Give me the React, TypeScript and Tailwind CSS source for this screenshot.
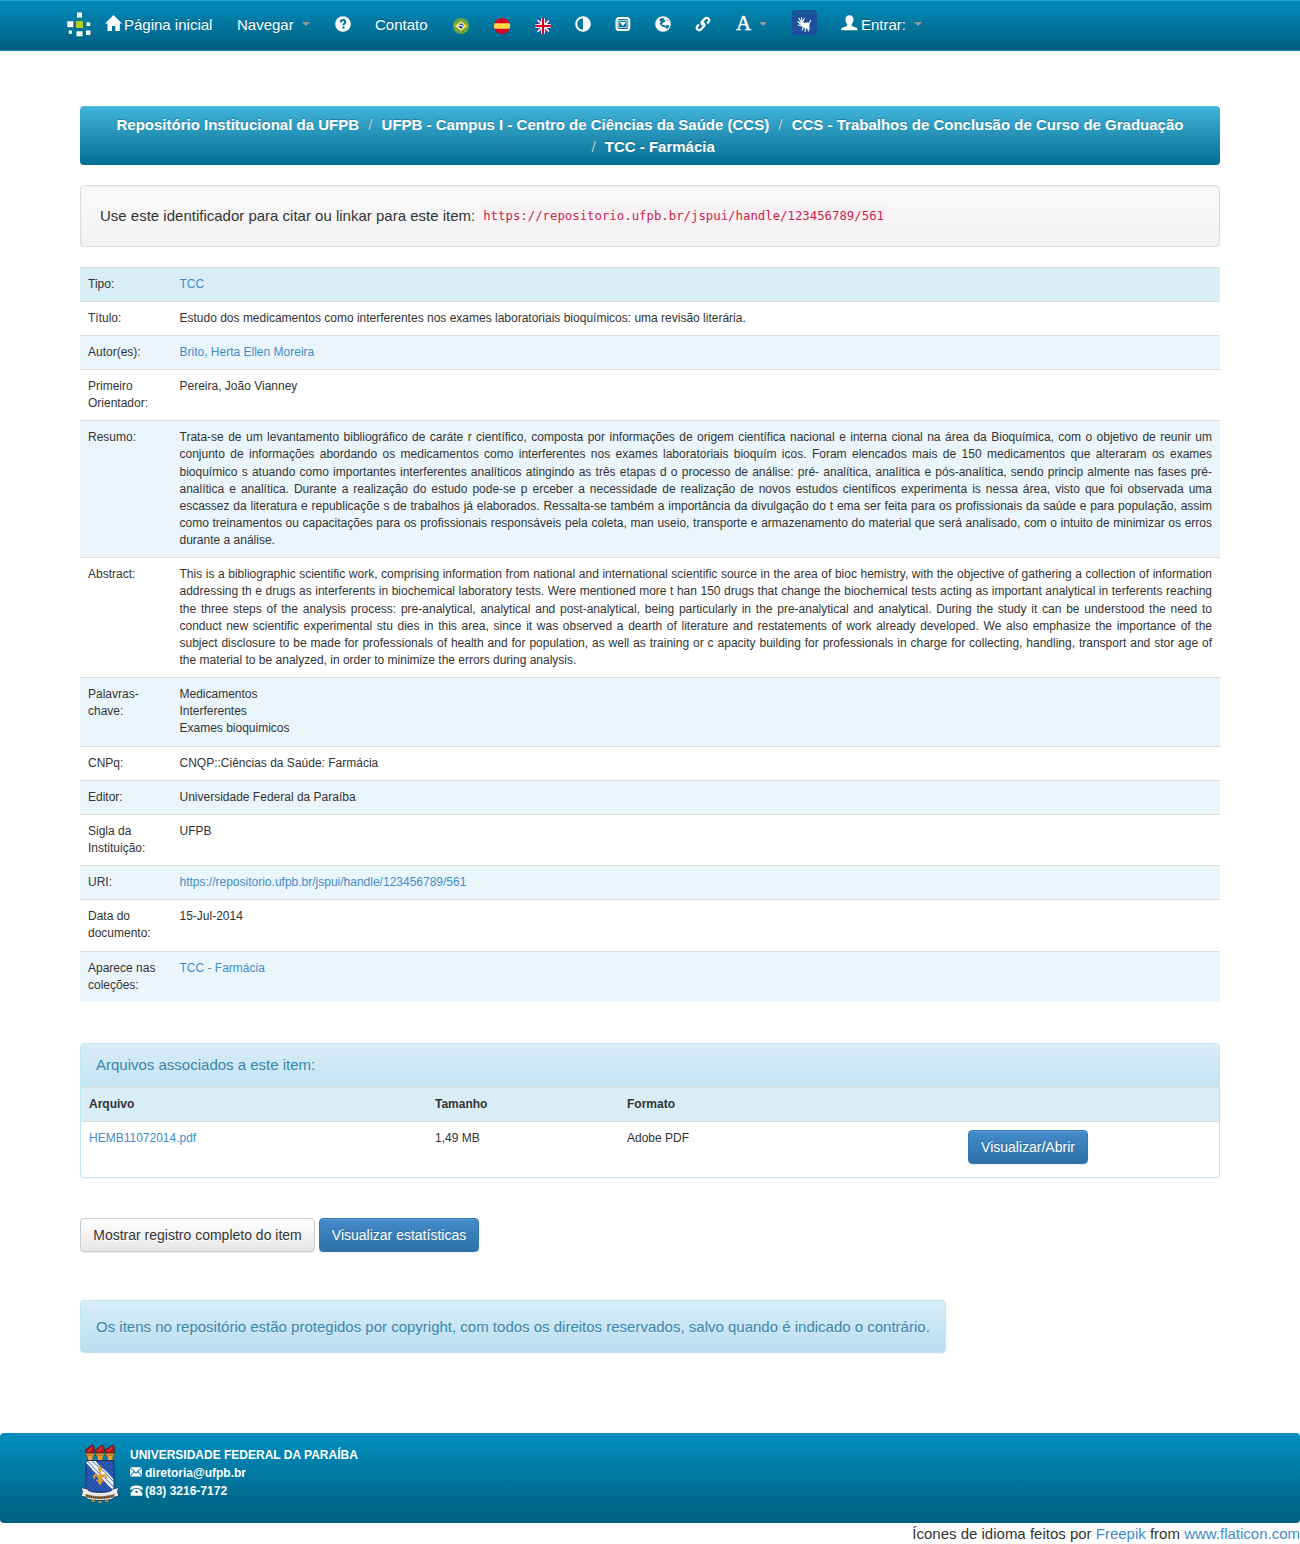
import type { ReactNode } from 'react';

const Caret = ({ className = '' }: { className?: string }) => (
  <span className={`-mt-[2px] inline-block h-0 w-0 border-x-4 border-t-4 border-x-transparent border-t-[#999] ${className}`} />
);

const Logo = () => (
  <svg width="26" height="26" viewBox="0 0 26 26" fill="#fff">
    <rect x="10" y="0.5" width="5" height="5" />
    <rect x="0.3" y="9.2" width="6" height="6" />
    <rect x="9" y="9" width="7" height="7" fill="#b5cc18" />
    <rect x="19.5" y="10.3" width="3.7" height="3.7" />
    <rect x="1.7" y="18.5" width="3.3" height="3.3" />
    <rect x="9.5" y="19.3" width="6" height="5" />
    <rect x="19" y="18.5" width="4.5" height="4.5" />
  </svg>
);

const HomeIcon = () => (
  <svg className="-mt-[3px]" width="17" height="16" viewBox="0 0 17 16" fill="#fff">
    <path d="M8.500 0 17 8.600h-2.200V16H10.300v-5H7v5H2.500V8.600H0L8.500 0z" />
  </svg>
);

const QuestionIcon = () => (
  <svg width="16" height="16" viewBox="0 0 16 16">
    <circle cx="8" cy="8" r="7.800" fill="#fff" />
    <path d="M5.800 6.400c0-1.700 1-2.400 2.200-2.400s2.300.7 2.300 2c0 1.500-1.900 1.500-1.900 3.200" fill="none" stroke="#00769f" strokeWidth="2.100" />
    <rect x="7.300" y="10.400" width="2.200" height="2.100" fill="#00769f" />
  </svg>
);

const BrazilFlag = () => (
  <svg width="16" height="16" viewBox="0 0 16 16">
    <circle cx="8" cy="8" r="8" fill="#6da544" />
    <path d="M8 3.100 14.300 8 8 12.900 1.700 8z" fill="#ffda44" />
    <circle cx="8" cy="8" r="2.900" fill="#f0f0f0" />
    <path d="M5.500 8.100c2-.4 3.500.1 4.700 1.500A2.800 2.800 0 0 1 5.500 8.100zM5.700 6.700a2.800 2.800 0 0 1 5.100 1.800C9.600 7 7.900 6.400 5.700 6.700z" fill="#0052b4" />
  </svg>
);

const SpainFlag = () => (
  <svg width="16" height="16" viewBox="0 0 16 16">
    <circle cx="8" cy="8" r="8" fill="#d80027" />
    <path d="M.5 5.200h15a8 8 0 0 1 0 5.600H.5a8 8 0 0 1 0-5.600z" fill="#ffda44" />
  </svg>
);

const BritainFlag = () => (
  <svg width="16" height="16" viewBox="0 0 16 16">
    <defs>
      <clipPath id="disc"><circle cx="8" cy="8" r="8" /></clipPath>
    </defs>
    <g clipPath="url(#disc)">
      <rect width="16" height="16" fill="#0052b4" />
      <path d="M0 0 16 16M16 0 0 16" stroke="#f0f0f0" strokeWidth="2.600" />
      <path d="M1 2 15 16M15 0 1 14" stroke="#d80027" strokeWidth="0.900" />
      <path d="M8 0v16M0 8h16" stroke="#f0f0f0" strokeWidth="4" />
      <path d="M8 0v16M0 8h16" stroke="#d80027" strokeWidth="2" />
    </g>
  </svg>
);

const ContrastIcon = () => (
  <svg width="16" height="16" viewBox="0 0 16 16">
    <circle cx="8" cy="8" r="6.800" fill="none" stroke="#fff" strokeWidth="2" />
    <path d="M8 1.500a6.500 6.500 0 0 1 0 13z" fill="#fff" />
  </svg>
);

const CollapseIcon = () => (
  <svg width="16" height="16" viewBox="0 0 16 16">
    <rect x="1.600" y="2" width="12.600" height="12" rx="2.600" fill="none" stroke="#fff" strokeWidth="2.200" />
    <rect x="3.800" y="4.500" width="8.200" height="7.200" fill="none" stroke="#fff" strokeWidth="0.700" />
    <path d="M4.600 6h6.600L7.900 10.100z" fill="#fff" />
  </svg>
);

const GlobeIcon = () => (
  <svg width="16" height="16" viewBox="0 0 16 16">
    <circle cx="8" cy="8" r="7.800" fill="#fff" />
    <path d="M5.300 2.500 9.500 2l-1 1.700 2 .4-.6 2-2.400 1-.5 1.700 2.300.2 1.700 1.400-.4 1.500-1.300-1-2.300-.5L4.800 8l1-2.600-1.500-1z" fill="#00769f" />
    <path d="m11.500 8.800 2.800.4-1 2.700-1.600 1.100-.9-1.700z" fill="#00769f" />
    <path d="m11.500 2.500 2.300 2.800-1.300-.2z" fill="#00769f" />
  </svg>
);

const LinkIcon = () => (
  <svg width="16" height="16" viewBox="0 0 16 16" fill="none" stroke="#fff" strokeWidth="2.200">
    <path d="M8.200 9.400 6.900 7.900a1.700 1.700 0 0 1 .1-2.300l3.300-3.300a1.900 1.900 0 0 1 2.700 0l.7.700a1.900 1.900 0 0 1 0 2.700L12 7.400" />
    <path d="m7.500 6.300 1.500 1.500a1.700 1.700 0 0 1 0 2.500l-3.400 3.400a1.900 1.900 0 0 1-2.700 0l-.7-.7a1.900 1.900 0 0 1 0-2.700L4 8.500" />
  </svg>
);

const LibrasIcon = () => (
  <svg width="25" height="25" viewBox="0 0 25 25">
    <rect width="25" height="25" rx="3.500" fill="#1c4f9c" />
    <path d="M2.500 4.500C5 1.800 9 1.600 12.500 4.800 16 1.600 20 1.800 22.500 4.500" fill="none" stroke="#00769f" strokeWidth="1" />
    <g fill="none" stroke="#fff" strokeLinecap="round" strokeWidth="1.100">
      <path d="M9.500 13 7 8.200M10 12.500 9.500 7.500M10.500 12l2-3.500M8.500 14 6 11.500M9.500 16l-3.200-1" />
      <path d="m16 16 1.500 3M15.500 17.500l1 3.500M13.500 18l-.5 3.500M11.500 17l-1.500 3M17 13.500l1.500-3" />
    </g>
    <path d="M8.500 12.500c1.500-1 3-.5 4.200.5 1.800-1 4.300-.6 4.800.8.500 1.600-.3 4-2 4.500-2 .6-3.500-.2-4.200-1.600-1.600 0-3-1.400-2.800-4.200z" fill="#fff" />
  </svg>
);

const UserIcon = () => (
  <svg className="-mt-[3px]" width="17" height="16" viewBox="0 0 17 16" fill="#fff">
    <path d="M8.500.2c2.600 0 4 1.700 4 4.100 0 2.100-.8 3.900-1.900 5v.9c0 .5.300.8.800 1l4 1.600c.7.300 1 .8 1 1.400V15.300H.2v-1.100c0-.6.300-1.100 1-1.400l4.200-1.600c.5-.2.800-.5.800-1v-.9C5.200 8.200 4.400 6.400 4.400 4.300 4.400 1.900 5.900.2 8.500.2z" />
  </svg>
);

const EnvelopeIcon = () => (
  <svg className="-mt-[2px]" width="12" height="10" viewBox="0 0 12 10" fill="#fff">
    <path d="M.4.200h11.200L6 5.200zM0 1.100l3.600 3.500L0 8.600zM12 1.100 8.400 4.600l3.600 4zM4.300 5.200 6 6.700l1.700-1.500 3.900 4.400H.4z" />
  </svg>
);

const PhoneIcon = () => (
  <svg className="-mt-px" width="13" height="11" viewBox="0 0 13 11">
    <path d="M.2 3.600C.8 1.300 2.600.4 6.500.4s5.700.9 6.300 3.200v1.200L9.400 4.300V2.900H3.600v1.400L.2 4.800z" fill="#fff" />
    <path d="M4.300 3.800h4.400l3.600 4.100v2.800H.7V7.900z" fill="#fff" />
    <circle cx="6.500" cy="6.900" r="1.200" fill="#007299" />
  </svg>
);

const Torch = ({ x }: { x: number }) => (
  <g transform={`translate(${x} 0)`}>
    <path d="M.8 9C-.6 6.800.3 4.900 2.400 4.300 4.200 3.400 4.800 2.200 7.400.8 7 2 9.300 2.500 8.400 4.300c1.200.7.800 2.600 0 4.700z" fill="#b8181c" stroke="#3c0c12" strokeWidth="0.700" />
    <path d="M2.500 7.600C3.600 5.600 5.500 5.800 6.400 3.200" stroke="#e8442e" fill="none" strokeWidth="1.200" />
    <path d="M.6 9.200h8v2.800l-1.300.8v3.700H2v-3.700l-1.400-.8z" fill="#e9a030" stroke="#5c3b12" strokeWidth="0.500" />
    <path d="M.8 11.200h7.600" stroke="#8c5514" strokeWidth="0.700" />
  </g>
);

const Crest = () => (
  <svg className="shrink-0" width="40" height="60" viewBox="0 0 40 60">
    <defs>
      <pattern id="specks" width="4" height="4" patternUnits="userSpaceOnUse">
        <rect width="4" height="4" fill="#1f4fae" />
        <circle cx="1" cy="1" r="0.500" fill="#7c8da4" />
        <circle cx="3" cy="3" r="0.500" fill="#7c8da4" />
      </pattern>
      <clipPath id="shield"><path d="M6 16.500h28V48H6z" /></clipPath>
    </defs>
    <Torch x={5.500} />
    <Torch x={15.500} />
    <Torch x={25.500} />
    <g clipPath="url(#shield)">
      <rect x="6" y="16" width="28" height="33" fill="url(#specks)" />
      <path d="M6 15C13 17 14 24 20 27.500S28 37 36 43" fill="none" stroke="#f4f6fa" strokeWidth="8" />
      <path d="M4 16C12 18 13 25 19 29s9 9 16 15M9 15c6 3 7 7 13 11s7 9 14 13" fill="none" stroke="#2a5db4" strokeWidth="0.900" />
    </g>
    <path d="M6 16.500h28V48H6z" fill="none" stroke="#12316f" strokeWidth="0.900" />
    <g fill="none" stroke="#e0a02a" strokeWidth="2">
      <path d="M20 23v16M14.500 34.500c-2-4 3-6 5.500 2 2.500-8 7.500-6 5.500-2M16.500 36.500h7" />
    </g>
    <path d="m20 20.500 2 4.500-2 5-2-5zM20 42l-2-4h4z" fill="#e0a02a" />
    <path d="M1 43.500 7.500 45c.5 1.500 2 2.300 4 2.700 5.500 1.100 11.500 1.100 17 0 2-.4 3.500-1.200 4-2.700l6.500-1.500-1.500 4L39 52c-4 .4-6 2-8 3.500-7 1.400-15 1.400-22 0C7 54 5 52.400 1 52l1.500-4.500z" fill="#e9e9ea" stroke="#16305c" strokeWidth="0.800" />
    <path d="M5.500 49.800c9 3.200 20 3.200 29 0v3c-9 3.100-20 3.100-29 0z" fill="#a5845c" />
    <path d="M6.500 51.700c9 2.600 18 2.600 27 0" fill="none" stroke="#4b3a2c" strokeWidth="2" strokeDasharray="1.300 0.900" />
    <path d="M11.500 56.700h3M18.500 58h3M25.500 56.700h3" stroke="#c08a2b" strokeWidth="2" />
  </svg>
);

const Link = ({ children }: { children: ReactNode }) => <a className="text-[#428bca]">{children}</a>;

const Justified = ({ lines }: { lines: string[] }) => (
  <>
    {lines.map((line, i) => (
      <span
        key={line}
        className={i < lines.length - 1 ? 'block whitespace-nowrap [text-align-last:justify]' : 'block'}
      >
        {line}
      </span>
    ))}
  </>
);

const resumo = [
  'Trata-se de um levantamento bibliográfico de caráte r científico, composta por informações de origem científica nacional e interna cional na área da Bioquímica, com o objetivo de reunir um',
  'conjunto de informações abordando os medicamentos como interferentes nos exames laboratoriais bioquím icos. Foram elencados mais de 150 medicamentos que alteraram os exames',
  'bioquímico s atuando como importantes interferentes analíticos atingindo as três etapas d o processo de análise: pré- analítica, analítica e pós-analítica, sendo princip almente nas fases pré-',
  'analítica e analítica. Durante a realização do estudo pode-se p erceber a necessidade de realização de novos estudos científicos experimenta is nessa área, visto que foi observada uma',
  'escassez da literatura e republicaçõe s de trabalhos já elaborados. Ressalta-se também a importância da divulgação do t ema ser feita para os profissionais da saúde e para população, assim',
  'como treinamentos ou capacitações para os profissionais responsáveis pela coleta, man useio, transporte e armazenamento do material que será analisado, com o intuito de minimizar os erros',
  'durante a análise.',
];

const abstractLines = [
  'This is a bibliographic scientific work, comprising information from national and international scientific source in the area of bioc hemistry, with the objective of gathering a collection of information',
  'addressing th e drugs as interferents in biochemical laboratory tests. Were mentioned more t han 150 drugs that change the biochemical tests acting as important analytical in terferents reaching',
  'the three steps of the analysis process: pre-analytical, analytical and post-analytical, being particularly in the pre-analytical and analytical. During the study it can be understood the need to',
  'conduct new scientific experimental stu dies in this area, since it was observed a dearth of literature and restatements of work already developed. We also emphasize the importance of the',
  'subject disclosure to be made for professionals of health and for population, as well as training or c apacity building for professionals in charge for collecting, handling, transport and stor age of',
  'the material to be analyzed, in order to minimize the errors during analysis.',
];

const rows: { label: ReactNode; value: ReactNode }[] = [
  { label: 'Tipo:', value: <Link>TCC</Link> },
  { label: 'Título:', value: 'Estudo dos medicamentos como interferentes nos exames laboratoriais bioquímicos: uma revisão literária.' },
  { label: 'Autor(es):', value: <Link>Brito, Herta Ellen Moreira</Link> },
  { label: <>Primeiro<br />Orientador:</>, value: 'Pereira, João Vianney' },
  { label: 'Resumo:', value: <Justified lines={resumo} /> },
  { label: 'Abstract:', value: <Justified lines={abstractLines} /> },
  { label: <>Palavras-<br />chave:</>, value: <>Medicamentos<br />Interferentes<br />Exames bioquimicos</> },
  { label: 'CNPq:', value: 'CNQP::Ciências da Saúde: Farmácia' },
  { label: 'Editor:', value: 'Universidade Federal da Paraíba' },
  { label: <>Sigla da<br />Instituição:</>, value: 'UFPB' },
  { label: 'URI:', value: <Link>https://repositorio.ufpb.br/jspui/handle/123456789/561</Link> },
  { label: <>Data do<br />documento:</>, value: '15-Jul-2014' },
  { label: <>Aparece nas<br />coleções:</>, value: <Link>TCC - Farmácia</Link> },
];

const navItems: { width: string; content: ReactNode }[] = [
  { width: 'w-[37.500px]', content: <Logo /> },
  { width: 'w-[132.500px]', content: <><HomeIcon /><span className="ml-[2.500px]">Página inicial</span></> },
  { width: 'w-[98px]', content: <>Navegar<Caret className="ml-2" /></> },
  { width: 'w-10', content: <span className="-mt-[3px]"><QuestionIcon /></span> },
  { width: 'w-[78px]', content: 'Contato' },
  { width: 'w-[41px]', content: <span className="mt-0.5"><BrazilFlag /></span> },
  { width: 'w-[41px]', content: <span className="mt-0.5"><SpainFlag /></span> },
  { width: 'w-10', content: <span className="mt-0.5"><BritainFlag /></span> },
  { width: 'w-10', content: <span className="-mt-[3px]"><ContrastIcon /></span> },
  { width: 'w-10', content: <span className="-mt-[3px]"><CollapseIcon /></span> },
  { width: 'w-10', content: <span className="-mt-[3px]"><GlobeIcon /></span> },
  { width: 'w-[41px]', content: <span className="-mt-[3px]"><LinkIcon /></span> },
  {
    width: 'w-14',
    content: (
      <>
        <span className="-mt-[3px] w-[15px] font-['Liberation_Serif',serif] text-[21px] leading-none [-webkit-text-stroke:0.500px_#fff]">A</span>
        <Caret className="ml-2" />
      </>
    ),
  },
  { width: 'w-[49px]', content: <span className="-mt-[5px]"><LibrasIcon /></span> },
  { width: 'w-[90px]', content: <><UserIcon /><span className="ml-[3px]">Entrar:</span><Caret className="ml-2" /></> },
];

const primaryButton =
  'h-[34px] rounded border border-[#3078b4] bg-linear-to-b from-[#428bca] to-[#3071a9] text-center text-sm leading-8 text-white shadow-[inset_0_1px_0_rgba(255,255,255,0.15),0_1px_1px_rgba(0,0,0,0.075)] [text-shadow:0_-1px_0_rgba(0,0,0,0.2)]';

const crumb = 'font-bold text-white';

export default function App() {
  return (
    <div className="h-[1544px] w-[1300px] overflow-hidden bg-white font-['Liberation_Sans',Arial,sans-serif] text-[15px] leading-[1.428571] text-[#333]">
      <nav className="flex h-[51px] items-center border-b border-[#0088bb] bg-linear-to-b from-[#038dbd] to-[#005f80] pl-[67px] whitespace-nowrap text-white shadow-[inset_0_1px_0_rgba(255,255,255,0.15)] [text-shadow:0_-1px_0_rgba(0,0,0,0.25)]">
        {navItems.map((item, i) => (
          <div key={i} className={`flex shrink-0 items-center ${item.width}`}>{item.content}</div>
        ))}
      </nav>

      <main className="mx-20 pt-[55px]">
        <div className="h-[59px] rounded bg-linear-to-b from-[#40b5da] to-[#006e94] py-2 text-center leading-[22px] whitespace-nowrap shadow-[inset_0_1px_0_rgba(255,255,255,0.1)] [text-shadow:0_-1px_0_rgba(0,0,0,0.25)]">
          <div>
            <a className={crumb}>Repositório Institucional da UFPB</a>
            <span className="px-[9.200px] text-[#ccc]">/</span>
            <a className={crumb}>UFPB - Campus I - Centro de Ciências da Saúde (CCS)</a>
            <span className="px-[9.200px] text-[#ccc]">/</span>
            <a className={crumb}>CCS - Trabalhos de Conclusão de Curso de Graduação</a>
          </div>
          <div className="pr-[3px]">
            <span className="px-[9.200px] text-[#ccc]">/</span>
            <a className={crumb}>TCC - Farmácia</a>
          </div>
        </div>

        <div className="mt-5 flex h-[62px] items-center rounded border border-[#dcdcdc] bg-linear-to-b from-[#fafafa] to-[#f3f3f3] px-[19px] shadow-[inset_0_1px_3px_rgba(0,0,0,0.05),0_1px_0_rgba(255,255,255,0.1)]">
          <span>Use este identificador para citar ou linkar para este item:</span>
          <code className="ml-1 rounded bg-[#f9f2f4] px-1 py-0.5 font-['DejaVu_Sans_Mono',monospace] text-[12.330px] leading-[17px] text-[#c7254e]">
            https://repositorio.ufpb.br/jspui/handle/123456789/561
          </code>
        </div>

        <div className="mt-[19.600px] text-xs leading-[17.143px]">
          {rows.map(({ label, value }, i) => (
            <div
              key={i}
              className={`flex border-t border-[#ddd] py-2 ${i === 0 ? 'bg-[#d9edf7]' : i % 2 === 0 ? 'bg-[#ebf6fc]' : 'bg-white'}`}
            >
              <div className="w-[91.500px] shrink-0 pl-2">{label}</div>
              <div className="grow pr-2 pl-2">{value}</div>
            </div>
          ))}
        </div>

        <section className="mt-[41.400px] h-[135px] overflow-hidden rounded border border-[#bce8f1] shadow-[0_1px_2px_rgba(0,0,0,0.05)]">
          <h2 className="h-[43px] bg-linear-to-b from-[#d9edf7] to-[#c4e3f3] px-[15px] pt-[10px] text-[#3a87ad]">
            Arquivos associados a este item:
          </h2>
          <div className="grid h-[34px] grid-cols-[346px_192px_341px_1fr] border-t border-[#ddd] bg-[#d9edf7] px-2 pt-2 text-xs leading-[17.143px] font-bold">
            <span>Arquivo</span>
            <span>Tamanho</span>
            <span>Formato</span>
          </div>
          <div className="grid h-14 grid-cols-[346px_192px_341px_1fr] border-t border-[#ddd] px-2 pt-2 text-xs leading-[17.143px]">
            <span><Link>HEMB11072014.pdf</Link></span>
            <span>1,49 MB</span>
            <span>Adobe PDF</span>
            <a className={`w-[120px] ${primaryButton}`}>Visualizar/Abrir</a>
          </div>
        </section>

        <div className="mt-10 flex gap-1">
          <a className="h-[34px] w-[235px] rounded border border-[#ccc] bg-linear-to-b from-white to-[#e6e6e6] text-center text-sm leading-8 shadow-[inset_0_1px_0_rgba(255,255,255,0.15),0_1px_1px_rgba(0,0,0,0.075)] [text-shadow:0_1px_0_#fff]">
            Mostrar registro completo do item
          </a>
          <a className={`w-40 ${primaryButton}`}>Visualizar estatísticas</a>
        </div>

        <div className="mt-12 h-[53px] w-[866px] rounded border border-[#bce8f1] bg-linear-to-b from-[#d9edf7] to-[#b9def0] px-[15px] pt-[15px] whitespace-nowrap text-[#3a87ad] shadow-[inset_0_1px_0_rgba(255,255,255,0.25),0_1px_2px_rgba(0,0,0,0.05)] [text-shadow:0_1px_0_rgba(255,255,255,0.2)]">
          Os itens no repositório estão protegidos por copyright, com todos os direitos reservados, salvo quando é indicado o contrário.
        </div>
      </main>

      <footer className="mt-20 flex h-[90px] rounded bg-linear-to-b from-[#038fbf] to-[#005f80] pt-[11px] pl-20">
        <Crest />
        <div className="ml-[10px] pt-0.5 text-xs leading-[18px] font-bold whitespace-nowrap text-white">
          <div>UNIVERSIDADE FEDERAL DA PARAÍBA</div>
          <div className="flex items-center gap-[3px]"><EnvelopeIcon />diretoria@ufpb.br</div>
          <div className="flex items-center gap-0.5"><PhoneIcon />(83) 3216-7172</div>
        </div>
      </footer>
      <div className="text-right whitespace-nowrap">
        Ícones de idioma feitos por <Link>Freepik</Link> from <Link>www.flaticon.com</Link>
      </div>
    </div>
  );
}
